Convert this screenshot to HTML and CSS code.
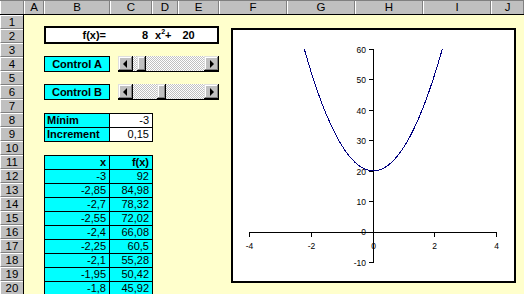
FILE: index.html
```html
<!DOCTYPE html>
<html lang="ca">
<head>
    <meta charset="UTF-8">
    <link rel="stylesheet" href="styles.css">
    <title>Funció quadràtica</title>
</head>
<body>
<div class="sheet">
    <div class="colheads">
        <div class="corner"></div>
        <div class="ch">A</div>
        <div class="ch">B</div>
        <div class="ch">C</div>
        <div class="ch">D</div>
        <div class="ch">E</div>
        <div class="ch">F</div>
        <div class="ch">G</div>
        <div class="ch">H</div>
        <div class="ch">I</div>
        <div class="ch">J</div>
    </div>

    <div class="main">
        <div class="rowheads">
            <div class="rh">1</div><div class="rh">2</div><div class="rh">3</div><div class="rh">4</div>
            <div class="rh">5</div><div class="rh">6</div><div class="rh">7</div><div class="rh">8</div>
            <div class="rh">9</div><div class="rh">10</div><div class="rh">11</div><div class="rh">12</div>
            <div class="rh">13</div><div class="rh">14</div><div class="rh">15</div><div class="rh">16</div>
            <div class="rh">17</div><div class="rh">18</div><div class="rh">19</div><div class="rh">20</div>
        </div>

        <div class="cells">
            <!-- formula text box -->
            <div class="formula">
                <span class="lhs">f(x)=</span>
                <span class="coef">8</span>
                <span class="term">x<sup>2</sup>+</span>
                <span class="const">20</span>
            </div>

            <div class="ctrl ctrl-a">Control A</div>
            <div class="scroll scroll-a">
                <span class="btn btn-left"><i class="arrow-left"></i></span>
                <span class="track"><span class="thumb" style="margin-left: 4px"></span></span>
                <span class="btn btn-right"><i class="arrow-right"></i></span>
            </div>

            <div class="ctrl ctrl-b">Control B</div>
            <div class="scroll scroll-b">
                <span class="btn btn-left"><i class="arrow-left"></i></span>
                <span class="track"><span class="thumb" style="margin-left: 24px"></span></span>
                <span class="btn btn-right"><i class="arrow-right"></i></span>
            </div>

            <div class="params">
                <div class="label">Mínim</div><div class="val white">-3</div>
                <div class="label">Increment</div><div class="val white">0,15</div>
            </div>

            <div class="data">
                <div class="val bold">x</div><div class="val bold">f(x)</div>
                <div class="val">-3</div><div class="val">92</div>
                <div class="val">-2,85</div><div class="val">84,98</div>
                <div class="val">-2,7</div><div class="val">78,32</div>
                <div class="val">-2,55</div><div class="val">72,02</div>
                <div class="val">-2,4</div><div class="val">66,08</div>
                <div class="val">-2,25</div><div class="val">60,5</div>
                <div class="val">-2,1</div><div class="val">55,28</div>
                <div class="val">-1,95</div><div class="val">50,42</div>
                <div class="val">-1,8</div><div class="val">45,92</div>
            </div>
        </div>
    </div>

    <!-- embedded chart -->
    <div class="chart">
        <svg width="285" height="255" viewBox="0 0 285 255">
            <defs>
                <clipPath id="plot"><rect x="0" y="21" width="285" height="234"/></clipPath>
            </defs>
            <rect x="1" y="1" width="283" height="253" fill="#fff" stroke="#000" stroke-width="2"/>

            <g class="axis">
                <line x1="142.5" y1="21" x2="142.5" y2="235"/>
                <line x1="18" y1="204.5" x2="266" y2="204.5"/>
                <!-- y ticks -->
                <line x1="138" y1="21.5" x2="142" y2="21.5"/>
                <line x1="138" y1="51.5" x2="142" y2="51.5"/>
                <line x1="138" y1="82.5" x2="142" y2="82.5"/>
                <line x1="138" y1="112.5" x2="142" y2="112.5"/>
                <line x1="138" y1="143.5" x2="142" y2="143.5"/>
                <line x1="138" y1="173.5" x2="142" y2="173.5"/>
                <line x1="138" y1="234.5" x2="142" y2="234.5"/>
                <!-- x ticks -->
                <line x1="18.5" y1="204" x2="18.5" y2="209"/>
                <line x1="80.5" y1="204" x2="80.5" y2="209"/>
                <line x1="142.5" y1="204" x2="142.5" y2="209"/>
                <line x1="203.5" y1="204" x2="203.5" y2="209"/>
                <line x1="265.5" y1="204" x2="265.5" y2="209"/>
            </g>

            <g class="ylabels">
                <text x="135" y="25">60</text>
                <text x="135" y="55">50</text>
                <text x="135" y="86">40</text>
                <text x="135" y="116">30</text>
                <text x="135" y="147">20</text>
                <text x="135" y="177">10</text>
                <text x="135" y="207">0</text>
                <text x="135" y="238">-10</text>
            </g>
            <g class="xlabels">
                <text x="18.5" y="221">-4</text>
                <text x="80.5" y="221">-2</text>
                <text x="142.5" y="221">0</text>
                <text x="203.5" y="221">2</text>
                <text x="265.5" y="221">4</text>
            </g>

            <polyline class="curve" clip-path="url(#plot)" points="
                49.78,-75.98 54.41,-54.64 59.03,-34.39 63.66,-15.24 68.28,2.82 72.91,19.78
                77.54,35.65 82.16,50.42 86.79,64.10 91.41,76.69 96.04,88.18 100.67,98.58
                105.29,107.88 109.92,116.09 114.54,123.20 119.17,129.22 123.80,134.14 128.42,137.98
                133.05,140.71 137.67,142.35 142.3,142.9 146.93,142.35 151.55,140.71 156.18,137.98
                160.80,134.14 165.43,129.22 170.06,123.20 174.68,116.09 179.31,107.88 183.93,98.58
                188.56,88.18 193.19,76.69 197.81,64.10 202.44,50.42 207.06,35.65 211.69,19.78
                216.32,2.82 220.94,-15.24 225.57,-34.39 230.19,-54.64 234.82,-75.98"/>
        </svg>
    </div>
</div>
</body>
</html>
```

FILE: styles.css
```css
* {
    box-sizing: border-box;
}

body {
    margin: 0;
    background-color: #ffffcc;
    font-family: "Liberation Sans", Arial, sans-serif;
    font-size: 11px;
    color: #000;
    overflow: hidden;
}

.sheet {
    position: relative;
    width: 524px;
    height: 294px;
    overflow: hidden;
}

/* Column and row headers */
.colheads {
    display: grid;
    grid-template-columns: 24px 20px 66px 42px 26px 41px repeat(4, 68px) 33px;
    height: 15px;
    background-color: #c0c0c0;
    border-top: 1px solid #808080;
    border-bottom: 1px solid #000;
}

.corner,
.ch {
    border-left: 1px solid #fff;
    border-right: 1px solid #808080;
}

.ch {
    text-align: center;
    line-height: 13px;
    font-size: 11.5px;
}

.main {
    display: flex;
}

.rowheads {
    flex: none;
    width: 24px;
    display: flex;
    flex-direction: column;
    background-color: #c0c0c0;
    border-right: 1px solid #000;
}

.rh {
    height: 14px;
    line-height: 13px;
    text-align: center;
    font-size: 11.5px;
    border-top: 1px solid #fff;
    border-bottom: 1px solid #808080;
    border-left: 1px solid #fff;
}

.cells {
    flex: none;
    display: grid;
    grid-template-columns: 20px 66px 42px 26px 41px repeat(4, 68px) 33px;
    grid-template-rows: repeat(20, 14px);
}

/* Formula text box */
.formula {
    grid-column: 2 / 6;
    grid-row: 2;
    margin-top: -3px;
    height: 18px;
    display: flex;
    align-items: center;
    background-color: #fff;
    border: 2px solid #000;
    font-weight: bold;
}

.formula .lhs {
    width: 62px;
    text-align: right;
    padding-right: 2px;
}

.formula .coef {
    width: 42px;
    text-align: right;
    padding-right: 2px;
}

.formula .term {
    padding-left: 5px;
}

.formula sup {
    font-size: 7px;
    vertical-align: 5px;
    line-height: 0;
}

.formula .const {
    padding-left: 11px;
}

/* Controls */
.ctrl {
    grid-column: 2;
    margin-top: -1px;
    height: 16px;
    line-height: 14px;
    text-align: center;
    font-weight: bold;
    background-color: #00ffff;
    border: 1px solid #000;
}

.ctrl-a,
.scroll-a {
    grid-row: 4;
}

.ctrl-b,
.scroll-b {
    grid-row: 6;
}

.scroll {
    grid-column: 3 / 6;
    margin: -1px 0 0 8px;
    width: 101px;
    height: 16px;
    display: flex;
    border-bottom: 1px solid #000;
}

.btn {
    flex: none;
    width: 15px;
    height: 15px;
    display: flex;
    align-items: center;
    justify-content: center;
    background-color: #c0c0c0;
    box-shadow: inset -1px -1px #000, inset 1px 1px #dfdfdf, inset -2px -2px #808080, inset 2px 2px #fff;
}

.arrow-left,
.arrow-right {
    width: 0;
    height: 0;
    border-top: 4px solid transparent;
    border-bottom: 4px solid transparent;
}

.arrow-left {
    border-right: 4px solid #000;
    margin-right: 1px;
}

.arrow-right {
    border-left: 4px solid #000;
    margin-left: 1px;
}

.track {
    flex: 1;
    height: 15px;
    background-color: #fff;
    background-image: conic-gradient(#c0c0c0 25%, #fff 0 50%, #c0c0c0 0 75%, #fff 0);
    background-size: 2px 2px;
}

.thumb {
    display: block;
    width: 9px;
    height: 15px;
    background-color: #c0c0c0;
    box-shadow: inset -1px -1px #000, inset 1px 1px #dfdfdf, inset -2px -2px #808080, inset 2px 2px #fff;
}

/* Cell tables */
.params,
.data {
    grid-column: 2 / 4;
    align-self: start;
    display: grid;
    grid-template-columns: 64px 42px;
    grid-auto-rows: 13px;
    gap: 1px;
    padding: 1px;
    width: 109px;
    background-color: #000;
}

.params {
    grid-row: 8 / 10;
}

.data {
    grid-row: 11 / 21;
}

.label,
.val {
    line-height: 13px;
    background-color: #00ffff;
    white-space: nowrap;
}

.label {
    padding-left: 2px;
    font-weight: bold;
}

.val {
    text-align: right;
    padding-right: 3px;
}

.val.white {
    background-color: #fff;
}

.val.bold {
    font-weight: bold;
}

/* Chart */
.chart {
    position: absolute;
    left: 231px;
    top: 28px;
    width: 285px;
    height: 255px;
}

.chart svg {
    display: block;
}

.axis line {
    stroke: #000;
    stroke-width: 1;
    shape-rendering: crispEdges;
}

.ylabels text,
.xlabels text {
    font-family: "Liberation Sans", Arial, sans-serif;
    font-size: 8.5px;
    fill: #000;
}

.ylabels text {
    text-anchor: end;
}

.xlabels text {
    text-anchor: middle;
}

.curve {
    fill: none;
    stroke: #000080;
    stroke-width: 1;
    shape-rendering: crispEdges;
}
```
